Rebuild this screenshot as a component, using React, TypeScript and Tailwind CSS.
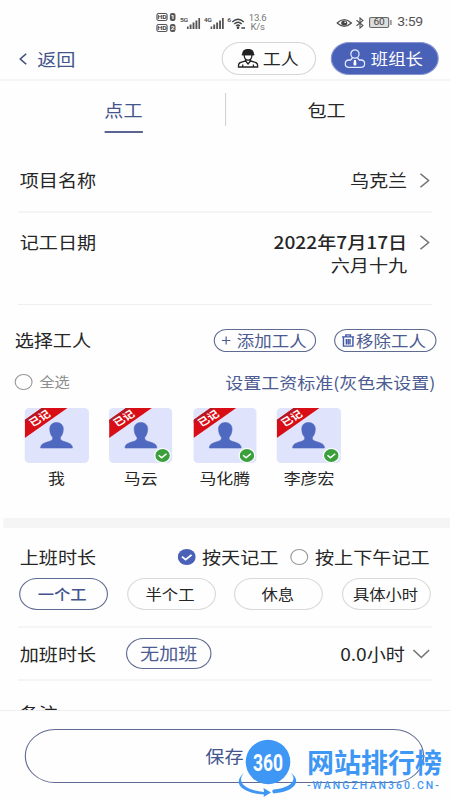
import React from 'react';

const WORKERS = [
  { name: '我', checked: false },
  { name: '马云', checked: true },
  { name: '马化腾', checked: true },
  { name: '李彦宏', checked: true },
];

const DURATIONS = ['一个工', '半个工', '休息', '具体小时'];

const HdBadge: React.FC<{ sim: number }> = ({ sim }) => (
  <div className="flex h-[8px] gap-[2px] text-[6px] font-bold leading-[6px] text-[#444]">
    <span className="flex w-[10px] items-center justify-center rounded-[2px] border border-[#555]">HD</span>
    <span className="flex w-[5px] items-center justify-center rounded-[2px] bg-[#555] text-white">{sim}</span>
  </div>
);

const Signal: React.FC<{ label: string }> = ({ label }) => (
  <div className="flex w-[21px]">
    <span className="w-[6px] text-[6px] font-bold leading-[6px] tracking-tighter text-[#555]">{label}</span>
    <svg className="mt-px h-[11px] w-[12px]" viewBox="0 0 13 11" preserveAspectRatio="none" fill="#555">
      <rect x="0" y="8.5" width="1.8" height="2.5" />
      <rect x="2.8" y="6.5" width="1.8" height="4.5" />
      <rect x="5.6" y="4.5" width="1.8" height="6.5" />
      <rect x="8.4" y="2.5" width="1.8" height="8.5" />
      <rect x="11.2" y="0" width="1.8" height="11" />
    </svg>
  </div>
);

const StatusBar: React.FC = () => (
  <div className="flex h-[38px] items-center pt-[7px] pl-[139px] font-[Roboto]">
    <div className="flex w-[21px] flex-col gap-[3px]">
      <HdBadge sim={1} />
      <HdBadge sim={2} />
    </div>
    <Signal label="5G" />
    <Signal label="4G" />
    <div className="flex w-[18px]">
      <span className="w-[4px] text-[6px] font-bold leading-[6px] text-[#555]">6</span>
      <svg className="mt-px h-[11px] w-[12px]" viewBox="0 0 14 11" preserveAspectRatio="none" fill="none" stroke="#444" strokeWidth="1.3">
        <path d="M0.5 4Q6.5-1.5 12.5 4M2.5 6Q6.5 2.5 10.5 6M4.5 8Q6.5 6 8.5 8" />
        <circle cx="6.5" cy="9.7" r=".7" fill="#444" />
        <path d="M10 10H14" />
      </svg>
    </div>
    <div className="w-[18px] text-center text-[8.5px] leading-[9px] tracking-[-0.2px] text-[#777]">
      <div>13.6</div>
      <div>K/s</div>
    </div>
    <svg className="ml-[61px] h-[8px] w-[14px]" viewBox="0 0 15 9" preserveAspectRatio="none">
      <path d="M.7 4.5Q7.5-3 14.3 4.5Q7.5 12 .7 4.5Z" fill="none" stroke="#555" strokeWidth="1.3" />
      <circle cx="7.5" cy="4.5" r="2.9" fill="#444" />
      <circle cx="8.4" cy="3.6" r=".9" fill="#fff" />
    </svg>
    <svg className="ml-[3px] h-[12px] w-[8px]" viewBox="0 0 9 12" preserveAspectRatio="none" fill="none" stroke="#555" strokeWidth="1.1">
      <path d="M1 3.2L7.5 8.5L4.5 11V1L7.5 3.5L1 8.8" />
    </svg>
    <div className="ml-[4px] flex h-[11px] w-[18px] items-center justify-center rounded-[2px] border border-[#666] bg-[#ddd] text-[9px] leading-none text-[#444]">60</div>
    <div className="ml-px h-[5px] w-px bg-[#666]" />
    <span className="ml-[5px] text-[12.5px] leading-none tracking-[-0.3px] text-[#555]">3:59</span>
  </div>
);

const Header: React.FC = () => (
  <header className="flex h-[43px] items-center border-b-2 border-[#f5f5f5] pr-[10.5px] pl-[17px]">
    <svg className="h-[12px] w-[7px]" viewBox="0 0 7 12" fill="none" stroke="#44527f" strokeWidth="1.5">
      <path d="M6.3 .7L1 6L6.3 11.3" />
    </svg>
    <span className="ml-[9px] text-[17px] text-[#44558c]">返回</span>
    <div className="ml-auto flex gap-[13px] text-[16px]">
      <button className="flex h-[33px] w-[84px] items-center rounded-full border border-[#d6d6d6] pl-[13px]">
        <svg className="h-[19px] w-[19px]" viewBox="0 0 22 19" preserveAspectRatio="none" fill="none" stroke="#222" strokeWidth="1.3">
          <path d="M5.5 5.5Q5.5 .6 11 .6T16.5 5.5Z" fill="#222" />
          <path d="M4.5 5.7H17.5M7 6Q7 11 11 11.2Q15 11 15 6M8.5 10.5V12L3.5 13.3Q.8 14 1 18H21Q21.2 14 18.5 13.3L13.5 12V10.5M5.5 18V15.5M16.5 18V15.5M8.5 12L11 15L13.5 12" />
        </svg>
        <span className="ml-[4px] -mt-px">工人</span>
      </button>
      <button className="flex h-[33px] w-[96px] items-center rounded-full border border-[#8795d4] bg-[#4a61b8] pl-[11px] text-white">
        <svg className="h-[19px] w-[19px]" viewBox="0 0 22 19" preserveAspectRatio="none" fill="none" stroke="#e3ebff" strokeWidth="1.3">
          <circle cx="11" cy="5" r="4.2" />
          <path d="M8.5 8.8L6.5 11H5Q1 11 1 14.7T5 18.3H17Q21 18.3 21 14.7T17 11H15.5L13.5 8.8" />
          <path d="M10 11H12L12.6 15.5L11 17L9.4 15.5Z" fill="#fff" stroke="none" />
        </svg>
        <span className="ml-[5px] text-[15.5px]">班组长</span>
      </button>
    </div>
  </header>
);

const Tabs: React.FC = () => (
  <nav className="flex h-[68px] items-start px-5 pt-[12px] text-[17px]">
    <div className="flex h-[40px] flex-1 justify-center">
      <div className="h-[40px] border-b-2 border-[#59658f] pt-[4px] text-[#44558c]">点工</div>
    </div>
    <div className="h-[33px] w-px bg-[#d2d2d2]" />
    <div className="flex flex-1 justify-center pt-[4px]">包工</div>
  </nav>
);

const ChevronRight: React.FC = () => (
  <svg className="mr-[2px] ml-[11px] h-[15px] w-[9px]" viewBox="0 0 9 15" fill="none" stroke="#777" strokeWidth="1.5">
    <path d="M.7 .8L8 7.5L.7 14.2" />
  </svg>
);

const Check: React.FC<{ color: string }> = ({ color }) => (
  <svg className="h-full w-full" viewBox="0 0 16 16" fill="none">
    <circle cx="8" cy="8" r="8" fill={color} />
    <path d="M3.8 7.7L7 10.7L12.3 5.8" stroke="#fff" strokeWidth="1.7" />
  </svg>
);

const WorkerCard: React.FC<{ name: string; checked: boolean }> = ({ name, checked }) => (
  <div className="flex w-[56.5px] flex-col items-center">
    <div className="relative h-[55px] w-full rounded-[4px] bg-[#dfe3fb]">
      <svg className="h-full w-full rounded-[4px]" viewBox="0 0 64 55" preserveAspectRatio="none">
        <path d="M32 14.5C27.5 14.5 25 17.5 25.2 21.500C25.4 25 26.5 27.5 28 29C28.8 31.5 27.5 32.5 24.5 33.5C19.5 35 16 36 16 40H48C48 36 44.5 35 39.5 33.5C36.5 32.5 35.2 31.5 36 29C37.5 27.5 38.6 25 38.8 21.5C39 17.5 36.5 14.5 32 14.5Z" fill="#4f68c0" stroke="#4f68c0" strokeWidth=".6" />
        <path d="M0 12L17 0H43L0 30Z" fill="#d90d16" />
        <path d="M0 12L17 0H22L0 15Z" fill="#b41a20" />
      </svg>
      <span className="absolute top-[4px] left-[3px] -rotate-[35deg] text-[10px] font-bold leading-[12px] whitespace-nowrap text-white">已记</span>
      {checked && (
        <div className="absolute right-[1px] bottom-0 h-[15px] w-[15px] rounded-full bg-white p-px">
          <Check color="#3ba03c" />
        </div>
      )}
    </div>
    <span className="mt-[5px] text-[15px] leading-[20px]">{name}</span>
  </div>
);

const WorkerSection: React.FC = () => (
  <section className="h-[213px] pt-[24px]">
    <div className="flex h-[23px] items-center gap-[16px] pr-[12.5px] pl-[13px]">
      <span className="-mt-px mr-auto text-[17px]">选择工人</span>
      <button className="flex h-[23px] w-[91px] items-center rounded-full border border-[#606b91] pl-[6px] text-[15.5px] text-[#4c5b91]">
        <svg className="mr-[6px] h-[9px] w-[8px]" viewBox="0 0 9 9" stroke="#4c5b91" strokeWidth="1.2">
          <path d="M0 4.5H9M4.5 0V9" />
        </svg>
        添加工人
      </button>
      <button className="flex h-[23px] w-[91px] items-center rounded-full border border-[#606b91] pl-[6px] text-[15.5px] text-[#4c5b91]">
        <svg className="mr-[2px] h-[13px] w-[11px]" viewBox="0 0 11 13" fill="none" stroke="#4358a5" strokeWidth="1.3">
          <path d="M0 2.8H11M3.5 2.5V.8H7.5V2.5M1.3 3V12.2H9.7V3M3.9 5V10.5M5.5 5V10.5M7.1 5V10.5" />
        </svg>
        移除工人
      </button>
    </div>
    <div className="mt-[18px] flex h-[24px] items-center pr-[13px] pl-[13px]">
      <span className="h-[16px] w-[16px] rounded-full border border-[#999]" />
      <span className="-mt-px ml-[6px] text-[13.5px] text-[#8c8c8c]">全选</span>
      <span className="-mt-px ml-auto text-[16px] text-[#4c5b91]">设置工资标准(灰色未设置)</span>
    </div>
    <div className="mt-[14px] flex gap-[18.3px] pl-[22px]">
      {WORKERS.map((w) => (
        <WorkerCard key={w.name} name={w.name} checked={w.checked} />
      ))}
    </div>
  </section>
);

const DurationSection: React.FC = () => (
  <section className="mx-4 h-[100px] border-b-2 border-[#f5f5f7] pt-[17px]">
    <div className="flex h-[24px] items-center pl-[1.5px] text-[17px]">
      <span>上班时长</span>
      <span className="ml-[72px] h-[16px] w-[16px]">
        <Check color="#4a61b8" />
      </span>
      <span className="ml-[6px]">按天记工</span>
      <span className="ml-[10.5px] h-[16px] w-[16px] rounded-full border border-[#999]" />
      <span className="ml-[6px] whitespace-nowrap">按上下午记工</span>
    </div>
    <div className="mt-[9px] flex gap-[16.8px] pl-[.8px] text-[14.5px]">
      {DURATIONS.map((d, i) => (
        <button
          key={d}
          className={
            i === 0
              ? 'h-[32px] w-[79px] rounded-full border border-[#606b91] pr-[2px] font-medium text-[#43548f]'
              : 'h-[32px] w-[79px] rounded-full border border-[#d9d9d9] pr-[2px]'
          }
        >
          {d}
        </button>
      ))}
    </div>
  </section>
);

// 360 badge with its swoosh and the site name, unscaled
const SiteMark: React.FC = () => (
  <div className="absolute top-[738px] left-[237px] flex w-[213px] text-[#3e97f5]">
    <svg className="h-[60px] w-[62px] shrink-0" viewBox="0 0 62 60">
      <circle cx="31" cy="24" r="22.3" fill="#3e97f5" />
      <path d="M7 35C-1 44 8 52 27 54L26.5 50L34 54.5L26.5 59L27 56.5C4 55 -5 45 7 35Z" fill="#3e97f5" />
      <path d="M54 35C61 43 52 50 36.5 51.5Q34 53 36.5 55.5C56 54 66 44 54 35Z" fill="#3e97f5" />
      <text x="31" y="32.500" textAnchor="middle" textLength="30" lengthAdjust="spacingAndGlyphs" fontFamily="Roboto" fontWeight="700" fontSize="24" fill="#fff">360</text>
    </svg>
    <div className="ml-[8px]">
      <div className="mt-[10px] text-[27px] font-bold leading-[28px] whitespace-nowrap">网站排行榜</div>
      <div className="mt-[4px] font-[Roboto] text-[10.5px] font-medium leading-[12px] tracking-[2.05px] whitespace-nowrap">-WANGZHAN360.CN-</div>
    </div>
  </div>
);

export default function App() {
  return (
    <div className="relative h-[800px] w-[450px] overflow-hidden bg-[#fefefe] font-['Noto_Sans_CJK_SC',sans-serif] text-[#262626]">
      <div className="flex h-[800px] w-[400px] origin-top-left scale-x-[1.125] flex-col">
        <StatusBar />
        <Header />
        <Tabs />
        <div className="mx-4 flex h-[64px] items-center border-b-2 border-[#f5f5f5] pl-[1.5px] text-[17px]">
          <span>项目名称</span>
          <span className="ml-auto">乌克兰</span>
          <ChevronRight />
        </div>
        <div className="mx-4 flex h-[92px] items-start border-b border-[#efefef] pt-[17px] pl-[1.5px] text-[17px] leading-[23px]">
          <span>记工日期</span>
          <div className="ml-auto text-right">
            <div className="font-medium">2022年7月17日</div>
            <div>六月十九</div>
          </div>
          <div className="pt-[5px]">
            <ChevronRight />
          </div>
        </div>
        <WorkerSection />
        <div className="ml-[3px] h-[10px] shrink-0 bg-[#f5f5f5]" />
        <DurationSection />
        <div className="mx-4 flex h-[53px] items-center border-b-2 border-[#f5f5f7] pl-[1.5px] text-[17px]">
          <span>加班时长</span>
          <button className="ml-[26.5px] h-[31px] w-[76px] rounded-full border border-[#606b91] pb-px text-[#4c5b91]">无加班</button>
          <span className="ml-auto">0.0小时</span>
          <svg className="mr-[2px] ml-[7px] h-[10px] w-[15px]" viewBox="0 0 15 10" fill="none" stroke="#777" strokeWidth="1.5">
            <path d="M.5 1L7.5 8.5L14.5 1" />
          </svg>
        </div>
        <div className="h-[29px] shrink-0 overflow-hidden pt-[19px] pl-[17.5px] text-[17px] leading-[25px]">备注</div>
        <footer className="flex h-[90px] shrink-0 justify-center border-t border-[#eee] pt-[18px] pr-px">
          <button className="h-[54px] w-[355px] rounded-full border border-[#606b91] text-[17px] text-[#43548f]">保存</button>
        </footer>
      </div>
      <SiteMark />
    </div>
  );
}
